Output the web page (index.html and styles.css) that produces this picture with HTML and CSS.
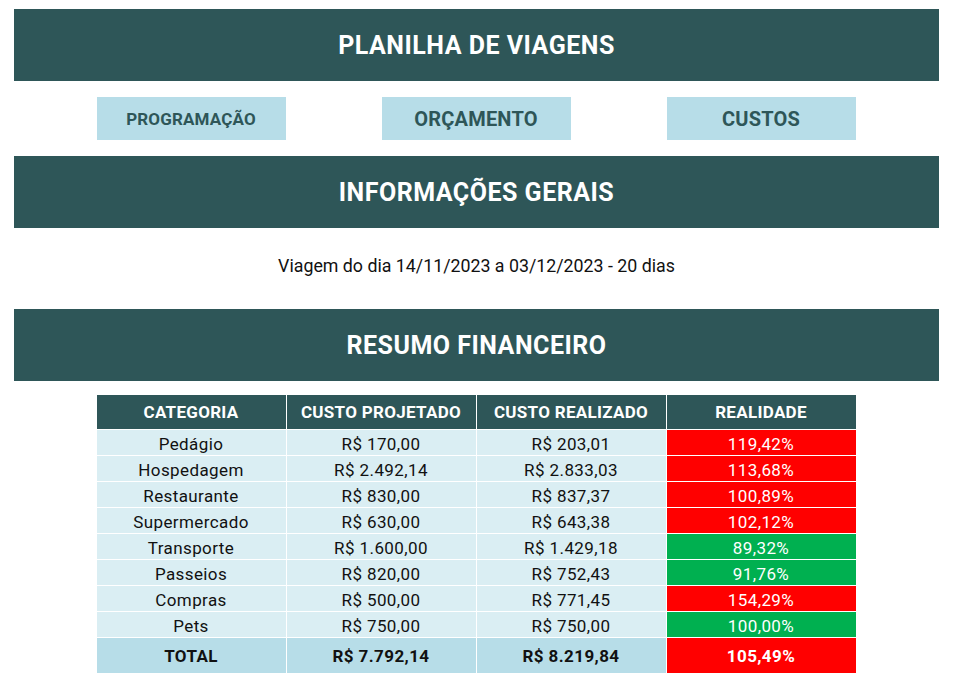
FILE: index.html
```html
<!DOCTYPE html>
<html lang="pt-BR">
<head>
<meta charset="utf-8">
<title>Planilha de Viagens</title>
<link rel="stylesheet" href="styles.css">
</head>
<body>
<div class="page">
  <header class="banner">PLANILHA DE VIAGENS</header>
  <nav class="nav">
    <a class="btn btn-small">PROGRAMAÇÃO</a>
    <a class="btn">ORÇAMENTO</a>
    <a class="btn">CUSTOS</a>
  </nav>
  <section class="banner">INFORMAÇÕES GERAIS</section>
  <p class="info">Viagem do dia 14/11/2023 a 03/12/2023 - 20 dias</p>
  <section class="banner">RESUMO FINANCEIRO</section>
  <div class="table-wrap">
    <table class="fin">
      <thead>
        <tr><th>CATEGORIA</th><th>CUSTO PROJETADO</th><th>CUSTO REALIZADO</th><th>REALIDADE</th></tr>
      </thead>
      <tbody>
        <tr><td>Pedágio</td><td>R$ 170,00</td><td>R$ 203,01</td><td class="bad">119,42%</td></tr>
        <tr><td>Hospedagem</td><td>R$ 2.492,14</td><td>R$ 2.833,03</td><td class="bad">113,68%</td></tr>
        <tr><td>Restaurante</td><td>R$ 830,00</td><td>R$ 837,37</td><td class="bad">100,89%</td></tr>
        <tr><td>Supermercado</td><td>R$ 630,00</td><td>R$ 643,38</td><td class="bad">102,12%</td></tr>
        <tr><td>Transporte</td><td>R$ 1.600,00</td><td>R$ 1.429,18</td><td class="good">89,32%</td></tr>
        <tr><td>Passeios</td><td>R$ 820,00</td><td>R$ 752,43</td><td class="good">91,76%</td></tr>
        <tr><td>Compras</td><td>R$ 500,00</td><td>R$ 771,45</td><td class="bad">154,29%</td></tr>
        <tr><td>Pets</td><td>R$ 750,00</td><td>R$ 750,00</td><td class="good">100,00%</td></tr>
      </tbody>
      <tfoot>
        <tr><td>TOTAL</td><td>R$ 7.792,14</td><td>R$ 8.219,84</td><td class="bad">105,49%</td></tr>
      </tfoot>
    </table>
  </div>
</div>
</body>
</html>
```
FILE: styles.css
```css
html, body {
  margin: 0;
  padding: 0;
  background: #ffffff;
}
body {
  font-family: Roboto, "Liberation Sans", Arial, sans-serif;
  color: #111111;
}
.page {
  padding: 9px 15px 0 14px;
}
.banner {
  height: 72px;
  background: #2e5658;
  color: #ffffff;
  font-weight: 700;
  font-size: 25px;
  letter-spacing: 0.5px;
  display: flex;
  align-items: center;
  justify-content: center;
}
.nav {
  display: flex;
  justify-content: center;
  gap: 96px;
  padding: 16px 0;
  margin-left: -1px;
}
.btn {
  width: 189px;
  height: 43px;
  background: #b7dde8;
  color: #2e5658;
  font-weight: 700;
  font-size: 20px;
  letter-spacing: 0.2px;
  display: flex;
  align-items: center;
  justify-content: center;
}
.btn-small {
  font-size: 17px;
  letter-spacing: 0.15px;
}
.info {
  margin: 0;
  padding: 27px 0 32px;
  line-height: 22px;
  font-size: 17.8px;
  text-align: center;
  color: #111111;
}
.table-wrap {
  display: flex;
  justify-content: center;
  padding-top: 13px;
  margin-left: -1px;
}
.fin {
  border-collapse: collapse;
  font-size: 17px;
  letter-spacing: 0.4px;
}
.fin th, .fin td {
  border: 1px solid #ffffff;
  width: 189px;
  padding: 0;
  text-align: center;
}
.fin th {
  height: 34px;
  background: #2e5658;
  color: #ffffff;
  font-weight: 700;
  letter-spacing: 0.3px;
}
.fin tbody td {
  height: 21px;
  line-height: 21px;
  padding-top: 4px;
  background: #daeef3;
  color: #111111;
}
.fin tfoot td {
  height: 35px;
  background: #b7dde8;
  font-weight: 700;
  color: #111111;
}
.fin td.bad {
  background: #ff0000;
  color: #ffffff;
}
.fin td.good {
  background: #00b050;
  color: #ffffff;
}
```
